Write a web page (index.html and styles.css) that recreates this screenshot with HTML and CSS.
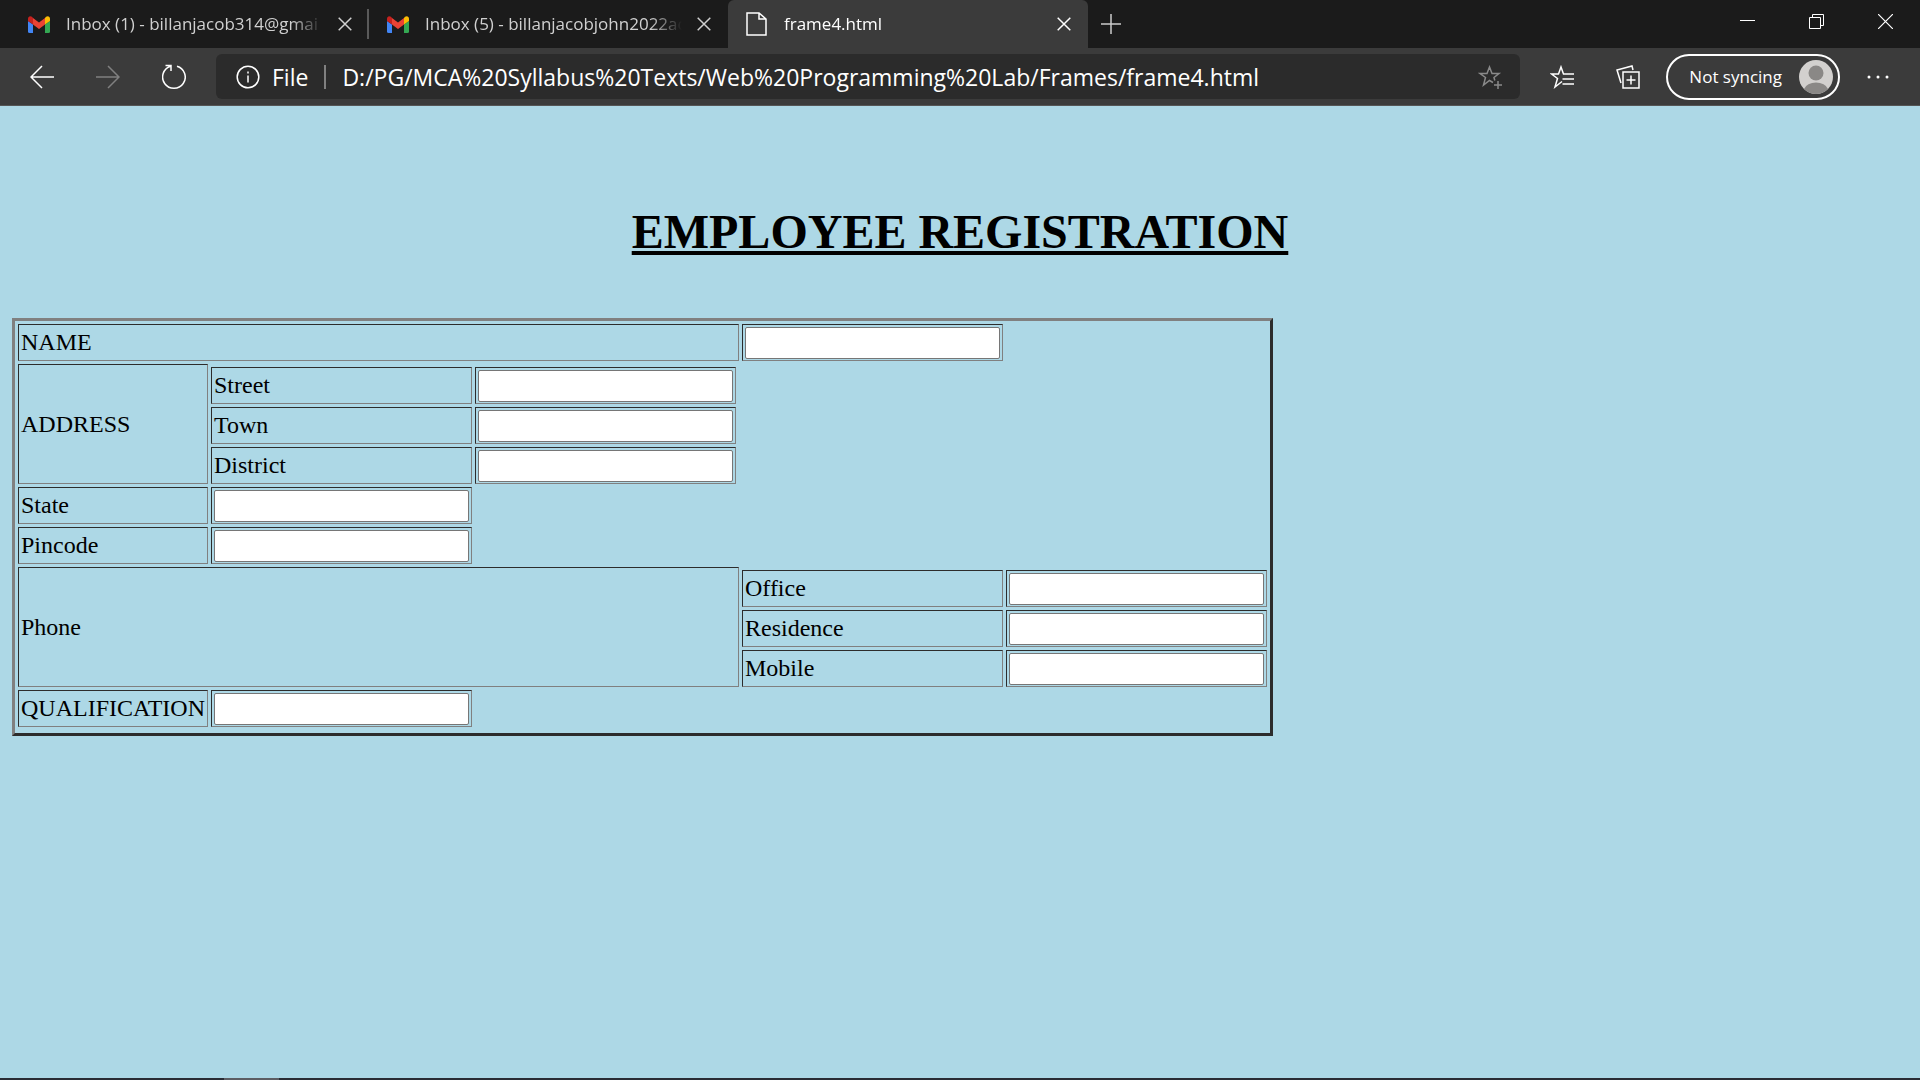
FILE: index.html
```html
<!DOCTYPE html>
<html lang="en">
<head>
<meta charset="utf-8">
<title>frame4.html</title>
<link rel="stylesheet" href="styles.css">
</head>
<body>
<svg class="defs" aria-hidden="true">
  <symbol id="gmail" viewBox="0 0 22 17">
    <path fill="#4285f4" d="M0 5v10.500Q0 17 1.500 17H5V8.500z"/>
    <path fill="#34a853" d="M22 5v10.500Q22 17 20.500 17H17V8.500z"/>
    <path fill="#ea4335" d="M5 2l6 4.500L17 2v6.500L11 13 5 8.500z"/>
    <path fill="#c5221f" d="M0 5V2.500C0 .3 2.300-.6 4 .8L5 2v6.500L0 5z"/>
    <path fill="#fbbc04" d="M22 5V2.500C22 .3 19.700-.6 18 .8L17 2v6.500L22 5z"/>
  </symbol>
  <symbol id="cross" viewBox="0 0 14 14"><path d="M.7.7l12.600 12.600M13.300.7L.7 13.300" fill="none" stroke="currentColor" stroke-width="1.500"/></symbol>
</svg>

<header class="browser">
  <div class="tabstrip">
    <div class="tab tab-divided">
      <svg class="tab-icon gmail-icon"><use href="#gmail"/></svg>
      <span class="tab-title">Inbox (1) - billanjacob314@gmai</span>
      <button class="tab-close" aria-label="Close tab"><svg width="14" height="14"><use href="#cross"/></svg></button>
    </div>
    <div class="tab">
      <svg class="tab-icon gmail-icon"><use href="#gmail"/></svg>
      <span class="tab-title">Inbox (5) - billanjacobjohn2022ac</span>
      <button class="tab-close" aria-label="Close tab"><svg width="14" height="14"><use href="#cross"/></svg></button>
    </div>
    <div class="tab tab-active">
      <svg class="tab-icon" viewBox="0 0 22 24"><path d="M1 1h12l7 6v16H1zM13 1v6h7" fill="none" stroke="#fff" stroke-width="1.500"/></svg>
      <span class="tab-title">frame4.html</span>
      <button class="tab-close" aria-label="Close tab"><svg width="14" height="14"><use href="#cross"/></svg></button>
    </div>
    <button class="new-tab" aria-label="New tab"><svg width="20" height="20"><path d="M10 0v20M0 10h20" fill="none" stroke="#ccc" stroke-width="1.500"/></svg></button>
    <div class="window-controls">
      <button class="window-btn" aria-label="Minimize"><svg width="15" height="15"><path d="M0 6.500h15" stroke="#fff"/></svg></button>
      <button class="window-btn" aria-label="Restore"><svg width="15" height="15"><path d="M.5 3.500h11v11H.5zM3.500 3.500v-3h11v11h-3" fill="none" stroke="#fff"/></svg></button>
      <button class="window-btn" aria-label="Close"><svg width="15" height="15"><path d="M0 0l15 15M15 0L0 15" stroke="#fff" stroke-width="1.200"/></svg></button>
    </div>
  </div>

  <div class="toolbar">
    <button class="tool" aria-label="Back"><svg width="24" height="24"><path d="M24 12H1M12 1L1 12l11 11" fill="none" stroke="#fff" stroke-width="1.500"/></svg></button>
    <button class="tool" aria-label="Forward" disabled><svg width="24" height="24"><path d="M0 12h23M12 1l11 11-11 11" fill="none" stroke="#808080" stroke-width="1.500"/></svg></button>
    <button class="tool" aria-label="Refresh"><svg width="24" height="26"><path d="M15 2.200A11.300 11.300 0 1 1 8.500 2.300M3.500 1.500h5.500v5.500" fill="none" stroke="#fff" stroke-width="1.500"/></svg></button>
    <div class="address">
      <svg class="info" width="24" height="24"><circle cx="12" cy="12" r="10.800" fill="none" stroke="#fff" stroke-width="1.500"/><path d="M12 10.500v7M12 6.500v2" stroke="#fff" stroke-width="1.500"/></svg>
      <span class="scheme">File</span>
      <input class="url" type="text" aria-label="Address" value="D:/PG/MCA%20Syllabus%20Texts/Web%20Programming%20Lab/Frames/frame4.html">
      <button class="favorite" aria-label="Add to favorites"><svg width="24" height="24" viewBox="0 0 24 24"><path d="M15 17.500l-3.500-2L5.500 20l2-7.500L2 8.500h7L11.500 2 14 8.500h7l-5 4 .8 3M20 16v8M16 20h8" fill="none" stroke="#8a8a8a" stroke-width="1.500"/></svg></button>
    </div>
    <button class="tool" aria-label="Favorites"><svg width="24" height="24" viewBox="0 0 24 24"><path d="M12 16.500L5 22l2.500-8.500L1.500 9h7L11 2l2.500 7H24M12.500 14H24M12.500 19H24" fill="none" stroke="#fff" stroke-width="1.500"/></svg></button>
    <button class="tool" aria-label="Collections"><svg width="24" height="24" viewBox="0 0 24 24"><path d="M7 7h16v16H7zM15 10.500v9M10.500 15h9M5 18L1 5l15-4 1 4" fill="none" stroke="#fff" stroke-width="1.500"/></svg></button>
    <button class="profile">
      <span>Not syncing</span>
      <svg width="34" height="34" viewBox="0 0 34 34"><circle cx="17" cy="17" r="17" fill="#d2d0ce"/><circle cx="17" cy="13" r="7.500" fill="#8a8886"/><path d="M5 29a12.500 9 0 0 1 24 0 17 17 0 0 1-24 0z" fill="#8a8886"/></svg>
    </button>
    <button class="tool" aria-label="Settings and more"><svg width="22" height="4"><g fill="#fff"><circle cx="2" cy="2" r="1.500"/><circle cx="11" cy="2" r="1.500"/><circle cx="20" cy="2" r="1.500"/></g></svg></button>
  </div>
</header>

<main class="page">
  <h1 class="heading">EMPLOYEE REGISTRATION</h1>
  <form>
    <table class="registration">
      <tbody>
        <tr><td colspan="4"><label for="name">NAME</label></td><td><input class="field" type="text" id="name"></td></tr>
        <tr><td rowspan="4">ADDRESS</td></tr>
        <tr><td><label for="street">Street</label></td><td><input class="field" type="text" id="street"></td></tr>
        <tr><td><label for="town">Town</label></td><td><input class="field" type="text" id="town"></td></tr>
        <tr><td><label for="district">District</label></td><td><input class="field" type="text" id="district"></td></tr>
        <tr><td><label for="state">State</label></td><td><input class="field" type="text" id="state"></td></tr>
        <tr><td><label for="pincode">Pincode</label></td><td><input class="field" type="text" id="pincode"></td></tr>
        <tr><td colspan="4" rowspan="4">Phone</td></tr>
        <tr><td><label for="office">Office</label></td><td><input class="field" type="text" id="office"></td></tr>
        <tr><td><label for="residence">Residence</label></td><td><input class="field" type="text" id="residence"></td></tr>
        <tr><td><label for="mobile">Mobile</label></td><td><input class="field" type="text" id="mobile"></td></tr>
        <tr><td><label for="qualification">QUALIFICATION</label></td><td><input class="field" type="text" id="qualification"></td></tr>
        <tr class="blank"><td colspan="3"></td><td></td></tr>
      </tbody>
    </table>
  </form>
</main>

<footer class="taskbar"><span class="taskbar-app"></span></footer>
</body>
</html>
```
FILE: styles.css
```css
* { box-sizing: border-box; }

body {
  margin: 0;
  min-height: 100vh;
  display: flex;
  flex-direction: column;
  background: #add8e6;
  color: #000;
  font: 24px/27px "Liberation Serif", serif;
}

button {
  display: flex;
  align-items: center;
  justify-content: center;
  padding: 0;
  border: 0;
  background: none;
  color: inherit;
  font: inherit;
}

.defs { display: none; }

/* Browser window */
.browser {
  color: #fff;
  font: 17px/24px "Open Sans", "Noto Sans", sans-serif;
  border-bottom: 1px solid #555;
}

.tabstrip {
  display: flex;
  height: 48px;
  padding-left: 10px;
  background: #1b1b1b;
}

.tab {
  display: flex;
  align-items: center;
  flex: 0 1 359px;
  min-width: 0;
  padding: 0 10px 0 18px;
  color: #d0d0d0;
}

.tab-divided {
  background: linear-gradient(#5a5a5a, #5a5a5a) right center / 2px 30px no-repeat;
}

.tab-active {
  flex-basis: 360px;
  background: #3b3b3b;
  color: #fff;
  border-radius: 6px 6px 0 0;
}

.tab-icon {
  flex: none;
  width: 22px;
  height: 24px;
}

.gmail-icon { height: 17px; }

.tab-title {
  flex: 1;
  min-width: 0;
  margin-left: 16px;
  overflow: hidden;
  white-space: nowrap;
  -webkit-mask-image: linear-gradient(to left, transparent, #000 32px);
  mask-image: linear-gradient(to left, transparent, #000 32px);
}

.tab-close {
  width: 28px;
  height: 28px;
  margin-left: 8px;
}

.new-tab { width: 46px; }

.window-controls {
  display: flex;
  margin-left: auto;
}

.window-btn {
  width: 69px;
  height: 43px;
}

.toolbar {
  display: flex;
  align-items: center;
  height: 57px;
  padding: 0 9px;
  background: #3b3b3b;
}

.tool {
  flex: none;
  width: 66px;
  height: 45px;
}

.address {
  display: flex;
  align-items: center;
  flex: 1;
  min-width: 0;
  height: 45px;
  margin: 0 9px;
  padding: 0 18px 0 20px;
  border-radius: 6px;
  background: #2b2b2b;
  font-size: 23px;
}

.info { flex: none; }

.scheme {
  margin-left: 12px;
  padding-right: 16px;
  border-right: 2px solid #808080;
}

.url {
  flex: 1;
  min-width: 0;
  height: 36px;
  padding: 0 0 0 16px;
  border: 0;
  background: none;
  color: #fff;
  font: inherit;
}

.favorite { flex: none; }

.profile {
  flex: none;
  gap: 17px;
  height: 46px;
  margin: 0 5px;
  padding: 0 5px 0 21px;
  border: 2px solid #fff;
  border-radius: 23px;
}

/* Page */
.page {
  flex: 1;
  padding: 98px 12px 12px;
}

.heading {
  margin: 0 0 58px;
  font-size: 48px;
  line-height: 56px;
  text-align: center;
  text-decoration: underline;
}

.registration {
  border: 3px outset gray;
  border-spacing: 3px;
}

.registration td {
  padding: 2px 2px 1px;
  border: 1px inset gray;
}

.registration label {
  display: block;
  padding-bottom: 2px;
}

.registration .blank td {
  padding: 0;
  border: 0;
}

.field {
  display: block;
  width: 255px;
  height: 32px;
  padding: 2px 3px;
  border: 1px solid #767676;
  border-radius: 2px;
  background: #fff;
  font: 20px/24px "Liberation Sans", sans-serif;
}

.taskbar {
  height: 2px;
  padding-left: 224px;
  background: #2a2c34;
}

.taskbar-app {
  display: block;
  width: 55px;
  height: 2px;
  background: #5c5d63;
}
```
